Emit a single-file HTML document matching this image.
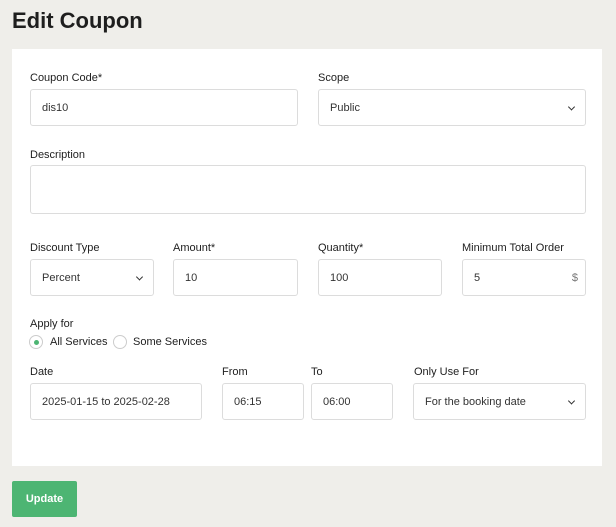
<!DOCTYPE html>
<html><head><style>
*{box-sizing:border-box;margin:0;padding:0}
body{width:616px;height:527px;background:#efeeea;font-family:"Liberation Sans",sans-serif;position:relative;overflow:hidden;color:#1e1e1e}
h1{position:absolute;left:12px;top:8px;font-size:22px;font-weight:bold;color:#1e1e1e}
.panel{position:absolute;left:12px;top:49px;width:590px;height:417px;background:#fff}
.l{position:absolute;font-size:11px;color:#1e1e1e}
.i{position:absolute;border:1px solid #dcdcdc;border-radius:3px;background:#fff;font-size:11px;color:#333;padding-left:11px;display:flex;align-items:center}
.c{position:absolute;right:11px;top:50%;width:5px;height:5px;border-right:1px solid #333;border-bottom:1px solid #333;transform:translateY(-70%) rotate(45deg)}
.btn{position:absolute;left:12px;top:481px;width:65px;height:36px;background:#4db573;color:#fff;font-size:11px;font-weight:bold;border-radius:2px;display:flex;align-items:center;justify-content:center}
.r{position:absolute;width:14px;height:14px;border:1px solid #ccc;border-radius:50%;top:335px}
</style></head><body>
<h1>Edit Coupon</h1>
<div class="panel"></div>
<div class="l" style="left:30px;top:72px">Coupon Code*</div>
<div class="l" style="left:318px;top:72px">Scope</div>
<div class="i" style="left:30px;top:89px;width:268px;height:37px">dis10</div>
<div class="i" style="left:318px;top:89px;width:268px;height:37px">Public<span class="c"></span></div>
<div class="l" style="left:30px;top:149px">Description</div>
<div class="i" style="left:30px;top:165px;width:556px;height:49px"></div>
<div class="l" style="left:30px;top:242px">Discount Type</div>
<div class="l" style="left:173px;top:242px">Amount*</div>
<div class="l" style="left:318px;top:242px">Quantity*</div>
<div class="l" style="left:462px;top:242px">Minimum Total Order</div>
<div class="i" style="left:30px;top:259px;width:124px;height:37px">Percent<span class="c"></span></div>
<div class="i" style="left:173px;top:259px;width:125px;height:37px">10</div>
<div class="i" style="left:318px;top:259px;width:124px;height:37px">100</div>
<div class="i" style="left:462px;top:259px;width:124px;height:37px">5<span style="position:absolute;right:7px;color:#777">$</span></div>
<div class="l" style="left:30px;top:318px">Apply for</div>
<div class="r" style="left:29px"><span style="position:absolute;left:4px;top:4px;width:5px;height:5px;border-radius:50%;background:#4db573"></span></div>
<div class="l" style="left:50px;top:336px">All Services</div>
<div class="r" style="left:113px"></div>
<div class="l" style="left:133px;top:336px">Some Services</div>
<div class="l" style="left:30px;top:366px">Date</div>
<div class="l" style="left:222px;top:366px">From</div>
<div class="l" style="left:311px;top:366px">To</div>
<div class="l" style="left:414px;top:366px">Only Use For</div>
<div class="i" style="left:30px;top:383px;width:172px;height:37px">2025-01-15 to 2025-02-28</div>
<div class="i" style="left:222px;top:383px;width:82px;height:37px">06:15</div>
<div class="i" style="left:311px;top:383px;width:82px;height:37px">06:00</div>
<div class="i" style="left:413px;top:383px;width:173px;height:37px">For the booking date<span class="c"></span></div>
<div class="btn">Update</div>
</body></html>
